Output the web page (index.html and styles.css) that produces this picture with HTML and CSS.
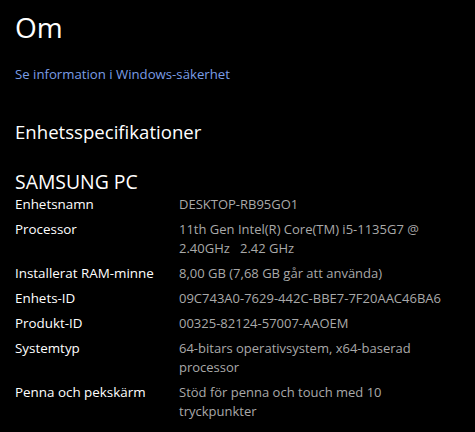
FILE: index.html
```html
<!DOCTYPE html>
<html lang="sv">
<head>
    <meta charset="UTF-8">
    <title>Om</title>
    <link rel="stylesheet" href="styles.css">
</head>
<body>
    <h1>Om</h1>
    <a class="link" href="#">Se information i Windows-säkerhet</a>

    <h2>Enhetsspecifikationer</h2>

    <div class="device">SAMSUNG PC</div>
    <div class="specs">
        <div class="label">Enhetsnamn</div>
        <div class="value">DESKTOP-RB95GO1</div>

        <div class="label">Processor</div>
        <div class="value">11th Gen Intel(R) Core(TM) i5-1135G7 @<br>2.40GHz&nbsp;&nbsp; 2.42 GHz</div>

        <div class="label">Installerat RAM-minne</div>
        <div class="value">8,00 GB (7,68 GB går att använda)</div>

        <div class="label">Enhets-ID</div>
        <div class="value">09C743A0-7629-442C-BBE7-7F20AAC46BA6</div>

        <div class="label">Produkt-ID</div>
        <div class="value">00325-82124-57007-AAOEM</div>

        <div class="label">Systemtyp</div>
        <div class="value">64-bitars operativsystem, x64-baserad<br>processor</div>

        <div class="label">Penna och pekskärm</div>
        <div class="value">Stöd för penna och touch med 10<br>tryckpunkter</div>
    </div>
</body>
</html>
```

FILE: styles.css
```css
body {
    margin: 0;
    padding: 0 15px;
    background-color: #000;
    color: #fff;
    font-family: "Open Sans", "Noto Sans", sans-serif;
}
h1 {
    margin: 0;
    padding-top: 9px;
    font-size: 28px;
    font-weight: 400;
    line-height: 36px;
}
.link {
    display: block;
    margin-top: 20px;
    color: #7a9de6;
    font-size: 13.2px;
    line-height: 18px;
    text-decoration: none;
}
h2 {
    margin: 36px 0 0;
    font-size: 18.6px;
    font-weight: 400;
    line-height: 26px;
}
.device {
    margin-top: 25px;
    font-size: 19.4px;
    line-height: 24px;
}
.specs {
    display: grid;
    grid-template-columns: 164px 1fr;
    row-gap: 6px;
    padding-top: 1px;
    font-size: 13px;
    line-height: 19px;
}
.label {
    color: #fff;
    font-size: 13.4px;
}
.value {
    color: #a9a9a9;
}
```
